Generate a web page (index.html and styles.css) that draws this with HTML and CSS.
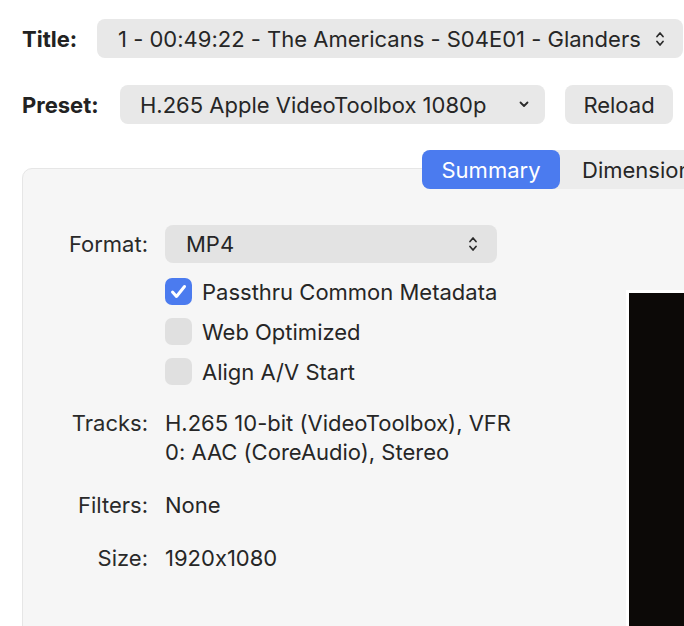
FILE: index.html
```html
<!DOCTYPE html>
<html>
<head>
<meta charset="utf-8">
<link rel="stylesheet" href="styles.css">
</head>
<body>
<div class="window">
  <div class="row title-row">
    <span class="label strong">Title:</span>
    <div class="popup title-popup">
      <span>1 - 00:49:22 - The Americans - S04E01 - Glanders</span>
      <svg class="updown" width="8" height="18" viewBox="0 0 8 18"><path d="M1 6.5 L4 3 L7 6.5 M1 11.5 L4 15 L7 11.5" fill="none" stroke="#2b2b2b" stroke-width="1.7" stroke-linecap="round" stroke-linejoin="round"/></svg>
    </div>
  </div>
  <div class="row preset-row">
    <span class="label strong">Preset:</span>
    <div class="popup preset-popup">
      <span>H.265 Apple VideoToolbox 1080p</span>
      <svg class="down" width="10" height="7" viewBox="0 0 10 7"><path d="M1.5 1.5 L5 5 L8.5 1.5" fill="none" stroke="#2b2b2b" stroke-width="1.8" stroke-linecap="round" stroke-linejoin="round"/></svg>
    </div>
    <div class="btn">Reload</div>
  </div>
  <div class="panel">
    <div class="tabs">
      <div class="tab active">Summary</div>
      <div class="tab">Dimensions</div>
    </div>
    <div class="panel-body">
      <div class="summary">
        <div class="slabel format-label">Format:</div>
        <div class="popup format-popup">
          <span>MP4</span>
          <svg class="updown" width="8" height="18" viewBox="0 0 8 18"><path d="M1 6.5 L4 3 L7 6.5 M1 11.5 L4 15 L7 11.5" fill="none" stroke="#2b2b2b" stroke-width="1.7" stroke-linecap="round" stroke-linejoin="round"/></svg>
        </div>
        <div></div>
        <div class="checks">
          <div class="check"><span class="box on"><svg width="27" height="27" viewBox="0 0 27 27"><path d="M7.5 14 L11.5 18.5 L19.5 8.5" fill="none" stroke="#fff" stroke-width="3" stroke-linecap="round" stroke-linejoin="round"/></svg></span>Passthru Common Metadata</div>
          <div class="check"><span class="box"></span>Web Optimized</div>
          <div class="check"><span class="box"></span>Align A/V Start</div>
        </div>
        <div class="slabel info">Tracks:</div>
        <div class="value info">H.265 10-bit (VideoToolbox), VFR<br>0: AAC (CoreAudio), Stereo</div>
        <div class="slabel info">Filters:</div>
        <div class="value info">None</div>
        <div class="slabel info">Size:</div>
        <div class="value info">1920x1080</div>
      </div>
      <div class="preview"></div>
    </div>
  </div>
</div>
</body>
</html>
```
FILE: styles.css
```css
html, body {
  margin: 0;
  padding: 0;
  background: #ffffff;
  overflow: hidden;
}
body {
  width: 684px;
  height: 626px;
  font-family: "Inter", "Noto Sans", sans-serif;
  font-size: 22px;
  font-feature-settings: "calt" 0;
  color: #262626;
}
.window {
  width: 1000px;
  padding-left: 22px;
}
.row {
  display: flex;
  align-items: center;
  height: 39px;
}
.title-row {
  margin-top: 19px;
  gap: 19px;
}
.preset-row {
  margin-top: 27px;
  gap: 18px;
}
.label.strong {
  font-weight: 700;
  color: #222;
  white-space: nowrap;
}
.title-row .label {
  width: 56px;
}
.preset-row .label {
  width: 80px;
}
.popup {
  display: flex;
  align-items: center;
  justify-content: space-between;
  box-sizing: border-box;
  height: 39px;
  background: #e8e8e8;
  border-radius: 8px;
  white-space: nowrap;
  flex-shrink: 0;
}
.title-popup {
  width: 586px;
  padding: 0 19px 0 21px;
}
.preset-popup {
  width: 425px;
  padding: 0 16px 0 20px;
}
.btn {
  box-sizing: border-box;
  width: 108px;
  height: 39px;
  margin-left: 2px;
  background: #e8e8e8;
  border-radius: 8px;
  display: flex;
  align-items: center;
  justify-content: center;
  flex-shrink: 0;
}
.panel {
  margin-top: 44px;
  width: 900px;
  height: 520px;
  background: #f6f6f6;
  border: 1px solid #e6e6e6;
  border-radius: 10px;
  box-sizing: border-box;
}
.tabs {
  display: flex;
  margin-top: -19px;
  margin-left: 399px;
  height: 39px;
  background: #ececec;
  border-radius: 8px;
  width: 320px;
}
.tab {
  display: flex;
  align-items: center;
  justify-content: center;
  height: 39px;
  padding: 0 22px;
  white-space: nowrap;
}
.tab.active {
  width: 138px;
  box-sizing: border-box;
  background: #4b7bef;
  color: #fff;
  border-radius: 8px;
}
.panel-body {
  display: flex;
}
.summary {
  width: 603px;
  flex-shrink: 0;
  padding-top: 36px;
  display: grid;
  grid-template-columns: 125px 1fr;
  column-gap: 17px;
  align-content: start;
}
.slabel {
  text-align: right;
  color: #2a2a2a;
  white-space: nowrap;
}
.format-label {
  line-height: 38px;
}
.format-popup {
  width: 332px;
  height: 38px;
  padding: 0 20px 0 21px;
  background: #e3e3e3;
}
.checks {
  margin-top: 15px;
  display: flex;
  flex-direction: column;
  gap: 13px;
}
.check {
  display: flex;
  align-items: center;
  gap: 10px;
  height: 27px;
  white-space: nowrap;
}
.box {
  width: 27px;
  height: 27px;
  border-radius: 7px;
  background: #e0e0e0;
  display: block;
  flex-shrink: 0;
}
.box.on {
  background: #4b7bef;
}
.box svg {
  display: block;
}
.info {
  line-height: 29px;
  margin-top: 24px;
}
.value {
  color: #262626;
  white-space: nowrap;
}
.preview {
  margin-top: 101px;
  width: 300px;
  height: 400px;
  flex-shrink: 0;
  background: #0c0907;
  border: 3px solid #ffffff;
}
```
